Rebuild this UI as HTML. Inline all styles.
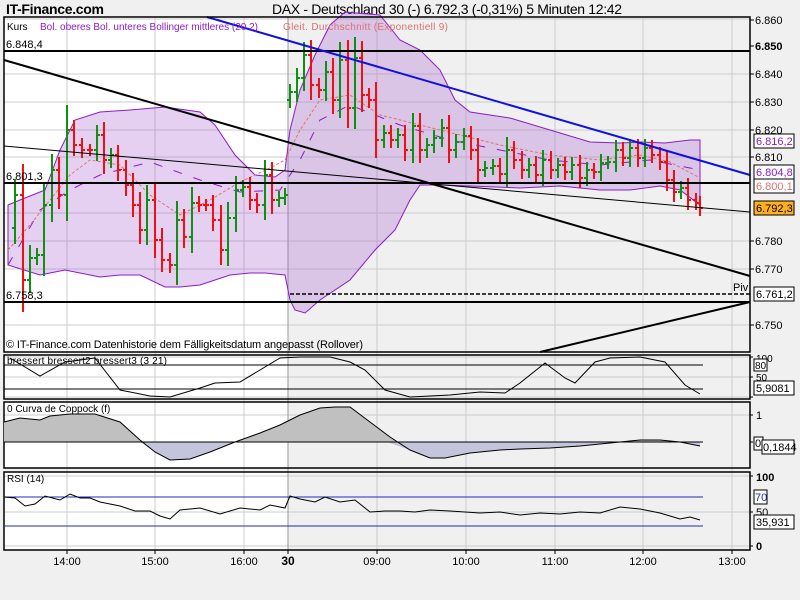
<!DOCTYPE html>
<html><head><meta charset="utf-8"><style>
body{margin:0;background:#f0f0f0;width:800px;height:600px;overflow:hidden;font-family:"Liberation Sans",sans-serif}
svg{position:absolute;left:0;top:0}
text{font-family:"Liberation Sans",sans-serif}
</style></head><body>
<svg width="800" height="600" viewBox="0 0 800 600" xmlns="http://www.w3.org/2000/svg">
<rect width="800" height="600" fill="#f0f0f0"/>
<text x="6" y="14" font-size="14" font-weight="bold" textLength="98">IT-Finance.com</text>
<text x="272" y="14" font-size="14" textLength="350">DAX - Deutschland 30 (-)    6.792,3 (-0,31%)    5 Minuten  12:42</text>
<g>
<rect x="4" y="17" width="284" height="335" fill="#fff"/><rect x="288" y="17" width="462" height="335" fill="#f0f0f0"/>
<rect x="4" y="355" width="284" height="44" fill="#fff"/><rect x="288" y="355" width="462" height="44" fill="#f0f0f0"/>
<rect x="4" y="402" width="284" height="66" fill="#fff"/><rect x="288" y="402" width="462" height="66" fill="#f0f0f0"/>
<rect x="4" y="472" width="284" height="78" fill="#fff"/><rect x="288" y="472" width="462" height="78" fill="#f0f0f0"/>
</g>
<g stroke="#cccccc" stroke-width="1">
<path d="M67 17V550M155 17V550M244 17V550M377 17V550M466 17V550M555 17V550M643 17V550M732 17V550"/>
<path d="M4 19H750M4 74H750M4 102H750M4 130H750M4 157H750M4 213H750M4 241H750M4 269H750M4 325H750"/>
<path d="M4 357H750M4 377H750M4 397H750M4 415H750M4 476H750M4 512H750M4 546H750"/>
</g>
<path d="M288 17V550" stroke="#999" stroke-width="1"/>
<path d="M8 205L20 200L45 190L60 150L75 120L100 112L130 110L165 107L200 112L215 125L235 155L255 175L275 177L285 170L290 130L300 90L315 55L330 25L345 12L380 15L400 40L420 50L440 70L455 100L470 112L510 118L550 130L590 142L620 143L640 142L665 143L690 140L700 140L700 205L680 190L660 186L630 190L600 190L560 186L520 188L470 186L440 185L420 185L410 200L395 230L375 250L350 280L320 300L305 313L295 310L290 300L285 275L265 273L250 273L230 275L200 285L180 287L165 287L140 275L120 275L100 277L65 270L50 273L40 275L8 265Z" fill="rgba(170,100,210,0.3)" stroke="#8a1cc8" stroke-width="1"/>
<path d="M8 265L40 210L70 190L100 175L150 162L200 180L240 192L280 190L300 160L320 120L350 105L400 125L450 140L500 150L550 160L600 165L650 160L700 170" fill="none" stroke="#8a1cc8" stroke-width="1" stroke-dasharray="9,12"/>
<path d="M8 250L30 225L50 200L70 175L90 160L120 165L150 195L180 215L210 200L240 182L270 168L285 160L300 130L320 100L350 95L380 115L420 125L460 135L500 145L550 155L600 160L640 155L670 162L700 178" fill="none" stroke="#e07070" stroke-width="1" stroke-dasharray="3,2"/>
<g id="bars"></g>
<g fill="none">
<path d="M4 51H750M4 183H750M4 302H750" stroke="#000" stroke-width="2"/>
<path d="M290 294H750" stroke="#000" stroke-width="1.5" stroke-dasharray="4,2"/>
<path d="M4 60L750 276" stroke="#000" stroke-width="2"/>
<path d="M4 146L750 212" stroke="#000" stroke-width="1"/>
<path d="M540 352L750 302" stroke="#000" stroke-width="2"/>
<path d="M207 17L750 175" stroke="#1010e0" stroke-width="2"/>
</g>
<text x="733" y="291" font-size="11">Piv</text>
<text x="7" y="30" font-size="10">Kurs</text>
<text x="40" y="30" font-size="10" fill="#8a1cc8" textLength="218">Bol. oberes Bol. unteres Bollinger mittleres (20 2)</text>
<text x="283" y="30" font-size="10" fill="#e07070" textLength="165">Gleit. Durchschnitt (Exponentiell 9)</text>
<text x="6" y="48" font-size="11">6.848,4</text>
<text x="6" y="180" font-size="11">6.801,3</text>
<text x="6" y="299" font-size="11">6.758,3</text>
<text x="6" y="348" font-size="11" textLength="357">© IT-Finance.com  Datenhistorie dem Fälligkeitsdatum angepasst (Rollover)</text>
<g fill="none" stroke="#000" stroke-width="1.5">
<rect x="4" y="17" width="746" height="335"/><rect x="4" y="355" width="746" height="44"/>
<rect x="4" y="402" width="746" height="66"/><rect x="4" y="472" width="746" height="78"/>
</g>
<g font-size="11">
<text x="755" y="24">6.860</text><text x="755" y="50" font-weight="bold">6.850</text>
<text x="755" y="78">6.840</text><text x="755" y="106">6.830</text><text x="755" y="134">6.820</text>
<text x="755" y="161">6.810</text><text x="755" y="245">6.780</text><text x="755" y="273">6.770</text>
<text x="755" y="329">6.750</text>
</g>
<g stroke="#000" stroke-width="1"><path d="M750 20h4M750 46h4M750 74h4M750 102h4M750 130h4M750 157h4M750 241h4M750 269h4M750 325h4M750 357h3M750 377h3M750 397h3M750 415h3M750 442h3M750 476h3M750 512h3M750 546h3"/></g>
<g font-size="11">
<rect x="754" y="134" width="40" height="14" fill="#fff" stroke="#000"/><text x="756" y="145" fill="#8a1cc8">6.816,2</text>
<rect x="754" y="165" width="40" height="14" fill="#fff" stroke="#000"/><text x="756" y="176" fill="#8a1cc8">6.804,8</text>
<rect x="754" y="179" width="40" height="14" fill="#fff" stroke="#000"/><text x="756" y="190" fill="#e07070">6.800,1</text>
<rect x="754" y="201" width="40" height="14" fill="#ffb020" stroke="#000"/><text x="756" y="212">6.792,3</text>
<rect x="754" y="287" width="40" height="14" fill="#fff" stroke="#000"/><text x="756" y="298">6.761,2</text>
</g>
<path d="M4 365H703M4 389H703" stroke="#000" stroke-width="1"/>
<path d="M10 358L40 376L65 362L95 358L120 390L150 396L170 397L200 388L215 383L240 382L265 367L280 358L300 357L330 357L350 362L365 370L385 390L410 397L450 395L480 392L505 393L520 383L545 363L565 378L575 383L595 362L610 358L640 357L665 362L685 385L700 394" fill="none" stroke="#000" stroke-width="1"/>
<text x="7" y="364" font-size="10" textLength="160">bressert bressert2 bressert3 (3 21)</text>
<g font-size="10"><text x="756" y="362">100</text>
<rect x="754" y="359" width="13" height="12" fill="#fff" stroke="#000"/><text x="755" y="369">80</text>
<text x="756" y="381">50</text>
<rect x="754" y="381" width="40" height="14" fill="#fff" stroke="#000"/><text x="756" y="392" font-size="11">5,9081</text></g>
<path d="M4 442L4 422L20 418L40 420L50 416L70 414L95 414L120 422L140 440L155 452L170 460L190 459L210 452L235 442L260 433L280 425L300 415L320 408L335 407L350 407L370 422L390 437L410 450L430 458L445 458L470 453L500 450L520 449L550 448L580 446L610 443L640 440L660 440L680 442L700 446L700 442Z" fill="#c0c0c0"/>
<path d="M140 442L155 452L170 460L190 459L210 452L235 442ZM387 442L410 450L430 458L445 458L470 453L500 450L520 449L550 448L580 446L610 443L620 442ZM680 442L700 446V442Z" fill="#c4c4dc"/>
<path d="M4 442H703" stroke="#000" stroke-width="1"/>
<path d="M4 422L20 418L40 420L50 416L70 414L95 414L120 422L140 440L155 452L170 460L190 459L210 452L235 442L260 433L280 425L300 415L320 408L335 407L350 407L370 422L390 437L410 450L430 458L445 458L470 453L500 450L520 449L550 448L580 446L610 443L640 440L660 440L680 442L700 446" fill="none" stroke="#000" stroke-width="1"/>
<text x="7" y="412" font-size="10">0 Curva de Coppock (f)</text>
<g font-size="11"><text x="756" y="419">1</text>
<rect x="754" y="437" width="9" height="13" fill="#fff" stroke="#000"/><text x="755" y="447">0</text>
<rect x="762" y="440" width="32" height="14" fill="#fff" stroke="#000"/><text x="763" y="451">0,1844</text></g>
<path d="M4 497H703M4 526H703" stroke="#2828b0" stroke-width="1"/>
<path d="M4 497L15 498L25 506L35 504L45 496L60 500L70 494L80 498L90 498L100 502L120 506L135 511L150 511L160 516L170 519L180 510L200 508L220 514L240 508L260 510L270 505L285 508L290 496L300 499L315 502L325 497L340 502L355 500L370 512L385 511L400 511L415 512L430 510L450 511L480 513L500 512L520 515L540 513L560 514L580 512L600 513L620 507L640 509L660 513L680 519L690 517L700 520" fill="none" stroke="#000" stroke-width="1"/>
<text x="7" y="482" font-size="10">RSI (14)</text>
<g font-size="11"><text x="756" y="481" font-weight="bold">100</text>
<rect x="754" y="490" width="13" height="14" fill="#fff" stroke="#000"/><text x="755" y="501" fill="#2828b0">70</text>
<text x="756" y="516">50</text>
<rect x="754" y="515" width="40" height="14" fill="#fff" stroke="#000"/><text x="756" y="526">35,931</text>
<text x="756" y="550" font-weight="bold">0</text></g>
<g font-size="11" text-anchor="middle">
<text x="67" y="565">14:00</text><text x="155" y="565">15:00</text><text x="244" y="565">16:00</text>
<text x="288" y="565" font-weight="bold" font-size="12">30</text><text x="377" y="565">09:00</text>
<text x="466" y="565">10:00</text><text x="555" y="565">11:00</text><text x="643" y="565">12:00</text><text x="732" y="565">13:00</text>
</g>
<g stroke="#000"><path d="M67 550v4M155 550v4M244 550v4M288 550v4M377 550v4M466 550v4M555 550v4M643 550v4M732 550v4"/></g>
</svg>
<script>
var L=[[8,228],[15,195],[23,280],[30,258],[37,255],[44,205],[52,170],[59,195],[67,130],[74,145],[82,150],[90,150],[97,135],[104,160],[111,155],[118,170],[126,185],[133,205],[140,230],[147,200],[155,240],[162,260],[170,265],[177,220],[184,237],[192,203],[199,205],[206,205],[213,220],[221,250],[228,218],[236,190],[243,187],[250,200],[257,205],[265,175],[272,200],[279,198],[285,195],
[290,92],[297,78],[304,55],[311,85],[319,90],[326,72],[333,100],[340,60],[348,108],[355,58],[362,95],[369,100],[376,140],[384,133],[391,140],[398,135],[405,150],[413,126],[420,150],[427,145],[434,138],[442,128],[449,150],[456,142],[464,136],[471,150],[478,170],[485,168],[493,166],[500,174],[507,150],[514,160],[522,170],[529,165],[536,175],[543,160],[551,170],[558,165],[565,172],[572,165],[580,178],[587,170],[594,172],[601,163],[608,162],[616,150],[623,158],[630,148],[638,158],[645,148],[652,155],[660,162],[667,180],[674,192],[681,188],[688,200],[696,203],[700,208]];
var r="",g="";
for(var i=1;i<L.length;i++){var x=L[i][0],o=L[i-1][0]<288&&x>=288?L[i][1]+8:L[i-1][1],c=L[i][1];
var d=Math.abs(c-o);var h=Math.min(o,c)-6-d*0.3,l=Math.max(o,c)+6+d*0.3;
var s="M"+x+" "+h.toFixed(0)+"V"+l.toFixed(0)+"M"+(x-3)+" "+o+"h3M"+x+" "+c+"h3";
if(c<o)g+=s;else r+=s;}
document.getElementById("bars").innerHTML='<path d="'+r+'" stroke="#f01010" stroke-width="2" fill="none"/><path d="'+g+'" stroke="#109010" stroke-width="2" fill="none"/>';
</script>
</body></html>
